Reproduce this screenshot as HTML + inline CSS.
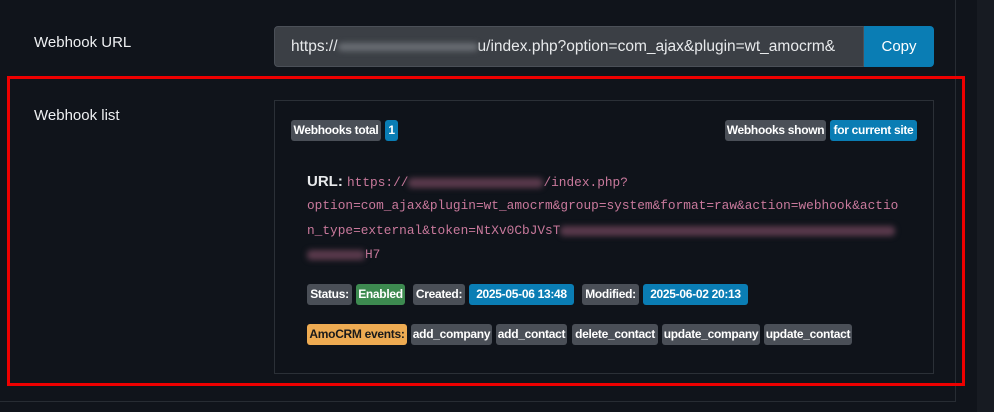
<!DOCTYPE html>
<html><head><meta charset="utf-8"><style>
*{margin:0;padding:0;box-sizing:border-box}
body{width:994px;height:412px;background:#10141b;font-family:"Liberation Sans",sans-serif;position:relative;overflow:hidden;color:#e6e8ea}
.right{position:absolute;left:977px;top:0;width:17px;height:412px;background:#171b22}
.pb{position:absolute;left:0;top:-2px;width:956px;height:404px;border-right:1px solid #272c33;border-bottom:1px solid #272c33}
.lbl{position:absolute;left:34px;font-size:15px;color:#eef0f2}
.inp{position:absolute;left:274px;top:26px;width:590px;height:41px;background:#3b3f45;border:1px solid #4b5058;border-radius:4px 0 0 4px;font-size:15.5px;color:#e8eaec;padding:11px 0 0 16px;white-space:nowrap;overflow:hidden}
.btn{position:absolute;left:864px;top:26px;width:70px;height:41px;background:#0a7db4;border-radius:0 4px 4px 0;font-size:15px;color:#fff;text-align:center;line-height:41px}
.red{position:absolute;left:7px;top:76px;width:958px;height:310px;border:3px solid #e00}
.card{position:absolute;left:274px;top:100px;width:660px;height:274px;border:1px solid #2b3037;background:#0f131a}
.b{position:absolute;height:21px;line-height:21px;border-radius:3px;font-size:12px;font-weight:bold;color:#fff;white-space:nowrap;text-align:center;letter-spacing:-0.3px;overflow:hidden}
.g{background:#4a4f57}.bl{background:#0a7db4}.gr{background:#3d8a50}.or{background:#eeab52;color:#1a1a1a}
.mono{position:absolute;left:307px;font-family:"Liberation Mono",monospace;font-size:12.8px;color:#c9799c;white-space:nowrap}
.blur{display:inline-block;height:10px;background:#5a3a4c;filter:blur(3px);vertical-align:middle;border-radius:4px}
</style></head><body>
<div class="right"></div>
<div class="pb"></div>
<div class="lbl" style="top:34px">Webhook URL</div>
<div class="inp">https://<span class="blur" style="width:140px;height:8px;background:#6a6e74"></span>u/index.php?option=com_ajax&amp;plugin=wt_amocrm&amp;</div>
<div class="btn">Copy</div>
<div class="red"></div>
<div class="lbl" style="top:107px">Webhook list</div>
<div class="card"></div>
<div class="b g" style="left:291px;top:120px;width:90px">Webhooks total</div>
<div class="b bl" style="left:385px;top:120px;width:13px">1</div>
<div class="b g" style="left:725px;top:120px;width:101px">Webhooks shown</div>
<div class="b bl" style="left:830px;top:120px;width:87px">for current site</div>
<div class="mono" style="top:173px"><span style="font-family:'Liberation Sans',sans-serif;font-weight:bold;font-size:15px;color:#e8eaec">URL: </span>https://<span class="blur" style="width:135px"></span>/index.php?</div>
<div class="mono" style="top:198px">option=com_ajax&amp;plugin=wt_amocrm&amp;group=system&amp;format=raw&amp;action=webhook&amp;actio</div>
<div class="mono" style="top:223px">n_type=external&amp;token=NtXv0CbJVsT<span class="blur" style="width:335px"></span></div>
<div class="mono" style="top:247px"><span class="blur" style="width:58px"></span>H7</div>
<div class="b g" style="left:307px;top:284px;width:45px">Status:</div>
<div class="b gr" style="left:356px;top:284px;width:49px">Enabled</div>
<div class="b g" style="left:413px;top:284px;width:52px">Created:</div>
<div class="b bl" style="left:469px;top:284px;width:105px">2025-05-06 13:48</div>
<div class="b g" style="left:582px;top:284px;width:57px">Modified:</div>
<div class="b bl" style="left:643px;top:284px;width:105px">2025-06-02 20:13</div>
<div class="b or" style="left:307px;top:324px;width:100px">AmoCRM events:</div>
<div class="b g" style="left:411px;top:324px;width:81px">add_company</div>
<div class="b g" style="left:496px;top:324px;width:71px">add_contact</div>
<div class="b g" style="left:572px;top:324px;width:86px">delete_contact</div>
<div class="b g" style="left:662px;top:324px;width:98px">update_company</div>
<div class="b g" style="left:764px;top:324px;width:88px">update_contact</div>
</body></html>
